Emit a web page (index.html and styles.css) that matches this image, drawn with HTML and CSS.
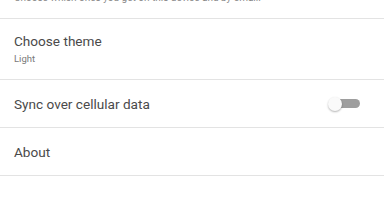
FILE: index.html
```html
<!DOCTYPE html>
<html lang="en">
<head>
  <meta charset="UTF-8" />
  <title>Settings</title>
  <link rel="stylesheet" href="styles.css">
</head>
<body>
  <div class="intro">Choose which ones you get on this device and by email.</div>

  <div class="row two-line">
    <div class="title">Choose theme</div>
    <div class="subtitle">Light</div>
  </div>

  <div class="row">
    <div class="title">Sync over cellular data</div>
    <div class="switch">
      <div class="track"></div>
      <div class="thumb"></div>
    </div>
  </div>

  <div class="row">
    <div class="title">About</div>
  </div>
</body>
</html>
```

FILE: styles.css
```css
body {
  margin: 0;
  background: #ffffff;
  font-family: Roboto, 'Noto Sans', sans-serif;
  overflow: hidden;
}

.intro {
  margin-top: -8px;
  padding: 0 14px 14px;
  font-size: 10px;
  line-height: 12px;
  color: #8a8a8a;
  border-bottom: 1px solid #e3e3e3;
}

.row {
  height: 47px;
  padding: 0 24px 0 14px;
  display: flex;
  align-items: center;
  justify-content: space-between;
  border-bottom: 1px solid #e3e3e3;
}

.row.two-line {
  height: auto;
  padding-top: 14px;
  padding-bottom: 14px;
  flex-direction: column;
  align-items: flex-start;
  gap: 4px;
}

.title {
  font-size: 13.6px;
  line-height: 16px;
  color: #4a4a4a;
}

.subtitle {
  font-size: 9.5px;
  line-height: 12px;
  color: #7a7a7a;
}

.switch {
  position: relative;
  width: 32px;
  height: 14px;
}

.track {
  position: absolute;
  left: 6px;
  right: 0;
  top: 2.5px;
  height: 9px;
  border-radius: 5px;
  background: #9e9e9e;
}

.thumb {
  position: absolute;
  left: 0;
  top: 0;
  width: 14px;
  height: 14px;
  border-radius: 50%;
  background: #fafafa;
  box-shadow: 0 1px 2px rgba(0,0,0,0.3);
}
```
